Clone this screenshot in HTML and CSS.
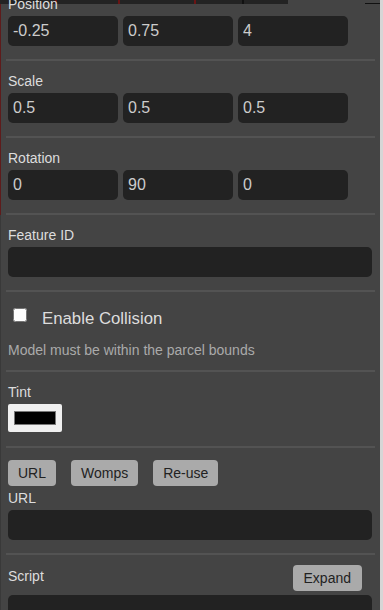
FILE: index.html
```html
<!DOCTYPE html>
<html lang="en">
<head>
  <meta charset="UTF-8" />
  <meta name="viewport" content="width=device-width, initial-scale=1.0"/>
  <title>Feature Editor</title>
  <link rel="stylesheet" href="styles.css">
</head>
<body>
  <div class="panel">
    <div class="strip">
      <span class="seg seg-a"></span>
      <span class="seg seg-b"></span>
      <span class="seg seg-c"></span>
      <span class="seg seg-d"></span>
      <span class="seg seg-e"></span>
      <span class="strip-line"></span>
    </div>

    <div class="section first">
      <label class="field-label">Position</label>
      <div class="triple">
        <input type="text" value="-0.25" />
        <input type="text" value="0.75" />
        <input type="text" value="4" />
      </div>
    </div>
    <hr />

    <div class="section">
      <label class="field-label">Scale</label>
      <div class="triple">
        <input type="text" value="0.5" />
        <input type="text" value="0.5" />
        <input type="text" value="0.5" />
      </div>
    </div>
    <hr />

    <div class="section">
      <label class="field-label">Rotation</label>
      <div class="triple">
        <input type="text" value="0" />
        <input type="text" value="90" />
        <input type="text" value="0" />
      </div>
    </div>
    <hr />

    <div class="section">
      <label class="field-label">Feature ID</label>
      <input type="text" class="wide" value="" />
    </div>
    <hr />

    <div class="section collision">
      <label class="check-row">
        <input type="checkbox" id="collision" />
        <span>Enable Collision</span>
      </label>
      <p class="hint">Model must be within the parcel bounds</p>
    </div>
    <hr />

    <div class="section tint">
      <label class="field-label">Tint</label>
      <div class="swatch"><div class="swatch-color"></div></div>
    </div>
    <hr />

    <div class="section">
      <div class="tabs">
        <button>URL</button>
        <button>Womps</button>
        <button>Re-use</button>
      </div>
      <label class="field-label">URL</label>
      <input type="text" class="wide" value="" />
    </div>
    <hr />

    <div class="section script">
      <div class="script-head">
        <label class="field-label">Script</label>
        <button>Expand</button>
      </div>
      <textarea class="code"></textarea>
    </div>
  </div>
</body>
</html>
```

FILE: styles.css
```css
* {
  box-sizing: border-box;
}

body {
  margin: 0;
  height: 100vh;
  overflow: hidden;
  font-family: 'Liberation Sans', Arial, sans-serif;
  background:
    linear-gradient(#5e1b1b, #5e1b1b) 0 0 / 1px 215px no-repeat,
    linear-gradient(#393939, #393939) 0 0 / 1px 100% no-repeat,
    #d6d6d6;
}

.panel {
  margin-left: 1px;
  width: 379px;
  height: 100vh;
  background: #444;
  padding: 0 8px 0 7px;
  color: #ddd;
}

/* bits of the toolbar scrolled above */
.strip {
  display: flex;
  height: 4px;
  margin-left: -8px;
  margin-right: -8px;
}

.seg {
  display: block;
  height: 4px;
  background: #232323;
  border-right: 2px solid #6a1414;
}

.seg-a { width: 57px; }
.seg-b { width: 63px; }
.seg-c { width: 76px; }
.seg-d { width: 48px; border-right-color: #111; }
.seg-e { width: 44px; border-right: none; }

.strip-line {
  display: block;
  margin-left: auto;
  align-self: flex-end;
  width: 15px;
  height: 1px;
  background: #111;
}

.section {
  padding: 12px 0 13px;
}

.section.first {
  margin-top: -20px;
}

.field-label {
  display: block;
  font-size: 14px;
  line-height: 16px;
  margin-bottom: 4px;
  color: #ddd;
}

.triple {
  display: grid;
  grid-template-columns: 110px 110px 110px;
  gap: 5px;
}

input[type="text"] {
  display: block;
  height: 30px;
  border: none;
  border-radius: 5px;
  background: #222;
  color: #ccc;
  font-family: inherit;
  font-size: 16px;
  padding: 0 5px;
  outline: none;
}

.triple input {
  width: 110px;
}

input.wide {
  width: 100%;
}

hr {
  border: none;
  height: 2px;
  background: #535353;
  margin: 0 -3px 0 -2px;
}

.collision {
  padding: 17px 0 12px;
}

.check-row {
  display: flex;
  align-items: flex-start;
  font-size: 16.8px;
  line-height: 19px;
  color: #ddd;
  padding-left: 5px;
}

.check-row input {
  margin: -1px 15px 0 0;
  width: 14px;
  height: 14px;
}

.hint {
  margin: 14px 0 0;
  font-size: 14px;
  line-height: 16px;
  color: #aaa;
}

.tint {
  padding-bottom: 14px;
}

.swatch {
  width: 54px;
  height: 28px;
  background: #efefef;
  border-radius: 2px;
  padding: 7px 6px;
}

.swatch-color {
  height: 14px;
  background: #000;
  border: 1px solid #777;
}

.tabs {
  display: flex;
  gap: 15px;
  margin-bottom: 4px;
}

button {
  font-family: inherit;
  font-size: 14px;
  line-height: 16px;
  height: 26px;
  padding: 5px 10px;
  border: none;
  border-radius: 4px;
  background: #aaa;
  color: #222;
  cursor: pointer;
}

.script {
  padding-top: 10px;
}

.script-head {
  display: flex;
  justify-content: space-between;
  align-items: flex-start;
  margin-bottom: 4px;
}

.script-head .field-label {
  margin: 3px 0 0;
}

.script-head button {
  margin-right: 10px;
  padding: 5px 11px;
}

.code {
  display: block;
  width: 100%;
  height: 80px;
  border: none;
  border-radius: 5px;
  background: #222;
  resize: none;
}
```
